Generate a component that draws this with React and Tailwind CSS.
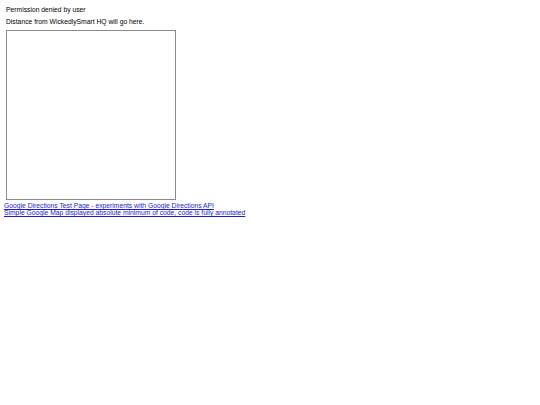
export default function App() {
  return (
    <div className="min-h-[405px] bg-white px-[4px] font-['Liberation_Sans',Arial,sans-serif] text-[6.75px] leading-[8px] text-black">
      <div className="px-[2px] pt-[6px]">
        <p>Permission denied by user</p>
        <p className="mt-[4px]">Distance from WickedlySmart HQ will go here.</p>
        <div className="mt-[4px] h-[170px] w-[170px] border border-[#8a8a8a]"></div>
      </div>
      <div className="mt-[2px] flex flex-col leading-[7px]">
        <a href="#" className="text-[#1a1ad0] underline">
          Google Directions Test Page - experiments with Google Directions API
        </a>
        <a href="#" className="text-[#1a1ad0] underline">
          Simple Google Map displayed absolute minimum of code, code is fully annotated
        </a>
      </div>
    </div>
  );
}
